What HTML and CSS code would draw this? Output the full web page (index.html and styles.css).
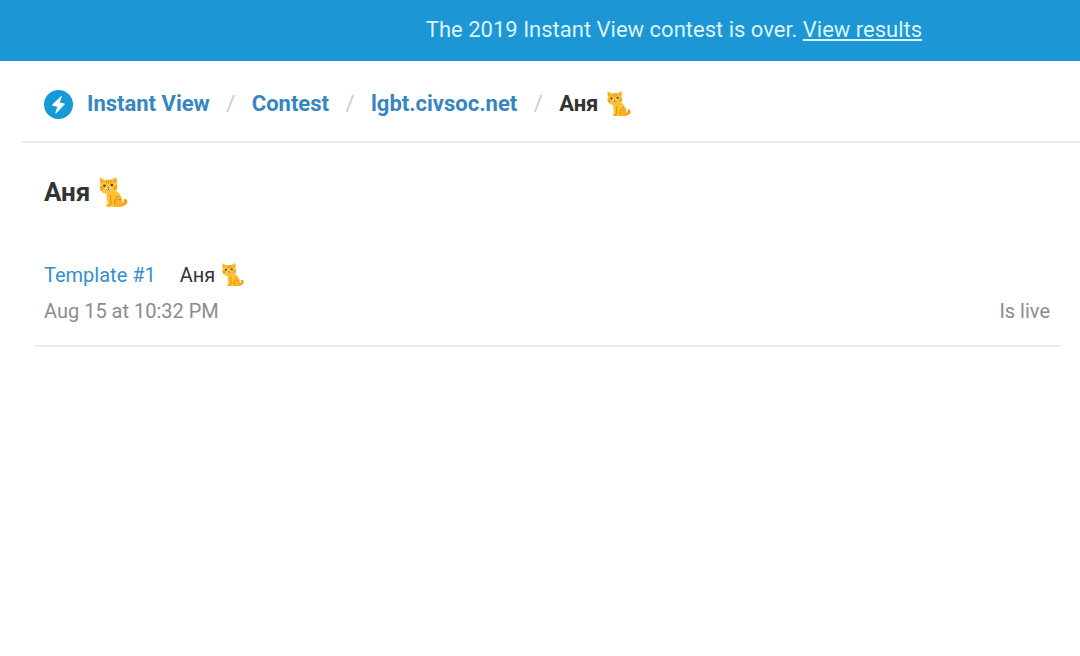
FILE: index.html
```
<!DOCTYPE html>
<html lang="en">
  <head>
    <meta charset="UTF-8" />
    <meta name="viewport" content="width=device-width, initial-scale=1.0" />
    <title>Аня – Instant View Contest</title>
    <link rel="stylesheet" href="styles.css">
  </head>
  <body>
    <svg class="sprite" aria-hidden="true">
      <symbol id="cat" viewBox="0 0 96 96">
        <path d="M66 80c10 4 15-1 14-7-1-5 4-8 8-4 7 8 1 20-11 20l-14-2z" fill="#f9a825" />
        <path d="M27 47c-2 12 0 24 3 34l-5 5c-2 4 1 6 6 6h41c7 0 8-6 3-9 3-14-4-28-17-39z" fill="#ffc233" />
        <path d="M60 66c-9 2-12 10-8 18l-4 5c0 3 3 3 6 3h18c7 0 8-6 3-9 1-10-5-18-15-17z" fill="#fbb321" />
        <path d="M39 58l1 27M33 91l4-7M52 84c-3-7 0-14 6-17" fill="none" stroke="#d98216" stroke-width="3" stroke-linecap="round" />
        <path d="M5 7C4 2 8 1 12 4l11 6c6-2 13-3 19-2l10-6c4-2 7 0 7 5l-1 15c5 12 1 22-8 26-12 6-28 5-37-1C5 41 4 31 7 22z" fill="#ffc233" />
        <path d="M9 8l7 5-6 6zM54 7l-7 5 7 6z" fill="#ef8d28" />
        <path d="M25 11l2 8M33 10v9M41 10l-2 8M8 32l7 1M9 39l7-2M57 29l-6 2M57 37l-7-1M65 60l-8 3M71 68l-7 2M83 72l4 5M76 82l3 5" fill="none" stroke="#df8520" stroke-width="3" stroke-linecap="round" />
        <ellipse cx="32" cy="37" rx="10" ry="7" fill="#ffe3a0" />
        <circle cx="20" cy="27" r="4" fill="#4b4520" />
        <circle cx="43" cy="25" r="4" fill="#4b4520" />
        <path d="M28 32h8l-4 4z" fill="#8a4b20" />
        <path d="M32 36v3M25 39c3 4 6 3 7 0 2 3 6 3 8-1" fill="none" stroke="#7b4a1c" stroke-width="2" stroke-linecap="round" />
      </symbol>
    </svg>

    <div class="banner">
      The 2019 Instant View contest is over. <a href="#">View results</a>
    </div>

    <header class="header">
      <nav aria-label="Breadcrumb">
        <ol class="breadcrumb">
          <li>
            <a class="brand" href="#">
              <svg class="logo" viewBox="0 0 30 30" aria-hidden="true">
                <circle cx="15" cy="15" r="15" fill="#129bd6" />
                <path d="M17.5 6.5L8.7 15.1c-.4.5-.2 1 .4 1.1l4.7 1-2 6.2c-.2.9.3 1.1.9.6l8.7-8.9c.5-.5.2-1-.4-1.1l-4.7-1 2.1-6c.2-.8-.3-1.1-.9-.5z" fill="#fff" />
              </svg>
              Instant View
            </a>
          </li>
          <li><a href="#">Contest</a></li>
          <li><a href="#">lgbt.civsoc.net</a></li>
          <li aria-current="page">Аня <svg class="cat" aria-hidden="true"><use href="#cat" /></svg></li>
        </ol>
      </nav>
    </header>

    <main class="content">
      <h1 class="title">Аня <svg class="cat" aria-hidden="true"><use href="#cat" /></svg></h1>

      <section class="template">
        <div class="template-head">
          <a href="#">Template #1</a>
          <span>Аня <svg class="cat" aria-hidden="true"><use href="#cat" /></svg></span>
        </div>
        <div class="template-info">
          <span>Aug 15 at 10:32 PM</span>
          <span>Is live</span>
        </div>
      </section>
    </main>
  </body>
</html>
```
FILE: styles.css
```
body {
  margin: 0;
  background-color: #fff;
  color: #333;
  font-family: Roboto, Arial, sans-serif;
  font-size: 20px;
  line-height: 36px;
}

a {
  color: #3490cc;
  text-decoration: none;
}

.sprite {
  display: none;
}

.banner {
  padding: 12px 0 13px 268px;
  background-color: #1c96d4;
  color: #d9f5ff;
  font-size: 22px;
  text-align: center;
}

.banner a {
  color: inherit;
  text-decoration: underline;
}

.header {
  margin-left: 22px;
  padding: 25px 22px 19px;
  border-bottom: 2px solid #ebebeb;
}

.breadcrumb {
  display: flex;
  align-items: center;
  margin: 0;
  padding: 0;
  list-style: none;
  font-size: 22px;
  font-weight: 700;
}

.breadcrumb a {
  color: #3586c2;
}

.breadcrumb li {
  display: flex;
  align-items: center;
}

.breadcrumb li + li::before {
  content: "/";
  width: 42px;
  color: #ccc;
  font-weight: 400;
  text-align: center;
}

.brand {
  display: flex;
  align-items: center;
  gap: 14px;
}

.logo {
  width: 29px;
  height: 29px;
}

.cat {
  width: 26px;
  height: 26px;
  margin-left: 8px;
}

.content {
  padding: 31px 20px 0 34px;
}

.title {
  display: flex;
  align-items: center;
  margin: 0;
  padding: 0 10px;
  font-size: 26px;
  font-weight: 700;
}

.title .cat {
  width: 31px;
  height: 31px;
}

.template {
  margin-top: 47px;
  padding: 0 10px 16px;
  border-bottom: 2px solid #ebebeb;
}

.template-head {
  display: flex;
  gap: 24px;
}

.template-head span {
  display: flex;
  align-items: center;
}

.template-head .cat {
  width: 24px;
  height: 24px;
  margin-left: 6px;
}

.template-info {
  display: flex;
  justify-content: space-between;
  color: #8c8c8c;
}
```
